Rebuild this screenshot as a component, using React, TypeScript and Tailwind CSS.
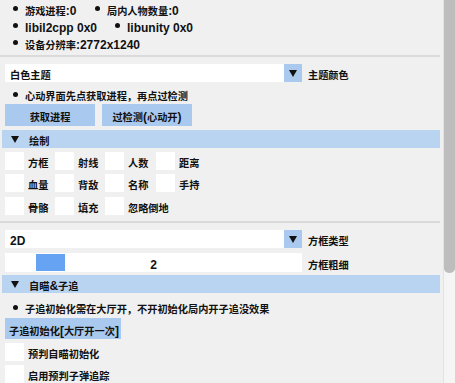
import React from 'react';

const CJK = /[\u3000-\u9fff\uff00-\uffef]/;

// CJK runs and latin runs use different faces and sizes, like the merged ImGui font
function T({ s }: { s: string }) {
  const parts = s.split(/([\u3000-\u9fff\uff00-\uffef]+)/).filter(Boolean);
  return (
    <span className="whitespace-nowrap">
      {parts.map((p, i) =>
        CJK.test(p) ? (
          <span key={i} className="text-[10.2px] font-['Noto_Sans_CJK_SC',sans-serif]">{p}</span>
        ) : (
          <span key={i} className="text-[12px] font-['Liberation_Sans',Arial,sans-serif]">{p}</span>
        )
      )}
    </span>
  );
}

function Tri() {
  return (
    <svg width="8" height="7" viewBox="0 0 8 7" className="block">
      <path d="M0 0H8L4 7Z" fill="#111" />
    </svg>
  );
}

function Bullet({ s }: { s: string }) {
  return (
    <div className="flex items-center">
      <span className="ml-[13px] w-[5px] h-[5px] rounded-full bg-[#111]" />
      <span className="ml-[7px]"><T s={s} /></span>
    </div>
  );
}

function Check({ label, w = 'w-[50px]' }: { label: string; w?: string }) {
  return (
    <div className={`flex items-center h-[18px] ${w}`}>
      <div className="w-[19px] h-[18px] bg-white shrink-0" />
      <span className="ml-[4px]"><T s={label} /></span>
    </div>
  );
}

function Combo({ value, label }: { value: string; label: string }) {
  return (
    <div className="flex items-center h-[18px]">
      <div className="ml-[5px] w-[279px] h-full bg-white flex items-center pl-[5px]"><T s={value} /></div>
      <div className="w-[18px] h-full bg-[#a9c9ef] flex items-center justify-center"><Tri /></div>
      <span className="ml-[6px]"><T s={label} /></span>
    </div>
  );
}

function Header({ label }: { label: string }) {
  return (
    <div className="ml-[2px] w-[438px] h-[18px] bg-[#b9d4f1] flex items-center">
      <span className="ml-[9px]"><Tri /></span>
      <span className="ml-[10px]"><T s={label} /></span>
    </div>
  );
}

export default function App() {
  return (
    <div className="w-[455px] h-[383px] bg-[#f0f0f0] flex overflow-hidden font-bold text-[#111] leading-none">
      <div className="w-[443px] flex flex-col">
        <div className="h-[17px] flex items-center">
          <div className="w-[82px]"><Bullet s="游戏进程:0" /></div>
          <Bullet s="局内人物数量:0" />
        </div>
        <div className="h-[17px] flex items-center">
          <div className="w-[102px]"><Bullet s="libil2cpp 0x0" /></div>
          <Bullet s="libunity 0x0" />
        </div>
        <div className="h-[17px] flex items-center">
          <Bullet s="设备分辨率:2772x1240" />
        </div>
        <div className="mt-[4px] w-[440px] h-[2px] bg-[#dadada]" />

        <div className="mt-[7px]"><Combo value="白色主题" label="主题颜色" /></div>
        <div className="mt-[4px] h-[16px] flex items-center">
          <Bullet s="心动界面先点获取进程，再点过检测" />
        </div>
        <div className="mt-[2px] h-[22px] flex">
          <div className="ml-[5px] w-[90px] bg-[#a9c9ef] flex items-center justify-center"><T s="获取进程" /></div>
          <div className="ml-[7px] w-[90px] bg-[#a9c9ef] flex items-center justify-center"><T s="过检测(心动开)" /></div>
        </div>

        <div className="mt-[4px]"><Header label="绘制" /></div>
        <div className="mt-[4px] ml-[5px] flex">
          <Check label="方框" /><Check label="射线" /><Check label="人数" w="w-[51px]" /><Check label="距离" />
        </div>
        <div className="mt-[4px] ml-[5px] flex">
          <Check label="血量" /><Check label="背敌" /><Check label="名称" w="w-[51px]" /><Check label="手持" />
        </div>
        <div className="mt-[5px] ml-[5px] flex">
          <Check label="骨骼" /><Check label="填充" /><Check label="忽略倒地" w="w-[100px]" />
        </div>
        <div className="mt-[6px] w-[440px] h-[2px] bg-[#dadada]" />

        <div className="mt-[7px]"><Combo value="2D" label="方框类型" /></div>
        <div className="mt-[5px] h-[19px] flex items-center">
          <div className="ml-[5px] w-[297px] h-full bg-white relative flex items-center justify-center">
            <div className="absolute left-[31px] top-[1px] w-[29px] h-[17px] bg-[#66a3f3]" />
            <span className="relative"><T s="2" /></span>
          </div>
          <span className="ml-[6px]"><T s="方框粗细" /></span>
        </div>
        <div className="mt-[3px]"><Header label="自瞄&子追" /></div>
        <div className="mt-[6px] h-[16px] flex items-center">
          <Bullet s="子追初始化需在大厅开，不开初始化局内开子追没效果" />
        </div>
        <div className="mt-[3px] h-[21px] flex">
          <div className="ml-[5px] w-[116px] bg-[#a9c9ef] flex items-center pl-[4px]"><T s="子追初始化[大厅开一次]" /></div>
        </div>
        <div className="mt-[4px] ml-[5px]"><Check label="预判自瞄初始化" w="w-[200px]" /></div>
        <div className="mt-[4px] ml-[5px]"><Check label="启用预判子弹追踪" w="w-[200px]" /></div>
      </div>
      <div className="w-[12px] h-full bg-[#f5f5f5] border-l border-[#e2e2e2]">
        <div className="w-[11px] h-[273px] bg-[#bdbdbd] rounded-b-[5px]" />
      </div>
    </div>
  );
}
